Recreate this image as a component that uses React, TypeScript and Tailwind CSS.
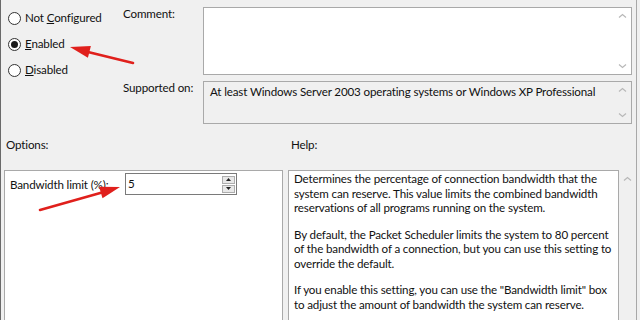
import React from "react";

const Chev = ({ down }: { down?: boolean }) => (
  <svg width="9" height="6" viewBox="0 0 9 6" className="block">
    <path
      d={down ? "M1 1.5 L4.5 4.5 L8 1.5" : "M1 4.5 L4.5 1.5 L8 4.5"}
      fill="none"
      stroke="#b8b8b8"
      strokeWidth="1.2"
    />
  </svg>
);

const Radio = ({ checked, children }: { checked?: boolean; children: React.ReactNode }) => (
  <div className="flex items-center h-[14px] gap-[4px]">
    <div className="w-[13px] h-[13px] rounded-full border border-[#333] bg-white flex items-center justify-center">
      {checked && <div className="w-[7px] h-[7px] rounded-full bg-[#1a1a1a]" />}
    </div>
    <span className="leading-[14px] whitespace-nowrap">{children}</span>
  </div>
);

export default function App() {
  return (
    <div
      className="relative w-[640px] h-[320px] overflow-hidden bg-[#f0f0f0] text-[#111] text-[11.6px] tracking-[-0.15px]"
      style={{ fontFamily: 'Lato, "Noto Sans", sans-serif' }}
    >
      <div className="absolute left-0 top-0 bottom-0 w-[1px] bg-[#6a6a6a]" />
      <div className="absolute right-[3px] top-0 bottom-0 w-[1px] bg-[#a8a8a8]" />

      {/* top section */}
      <div className="flex h-[132px]">
        <div className="w-[123px] pl-[8px] pt-[11px] flex flex-col gap-[12px]">
          <Radio>
            Not <u>C</u>onfigured
          </Radio>
          <Radio checked>
            <u>E</u>nabled
          </Radio>
          <Radio>
            <u>D</u>isabled
          </Radio>
        </div>
        <div className="flex flex-col pt-[7px]">
          <div className="flex">
            <div className="w-[80px] leading-[14px] whitespace-nowrap">Comment:</div>
            <div className="w-[429px] h-[68px] bg-white border border-[#a9a9a9] flex justify-end">
              <div className="w-[17px] flex flex-col justify-between items-center py-[5px]">
                <Chev />
                <Chev down />
              </div>
            </div>
          </div>
          <div className="flex mt-[6px]">
            <div className="w-[80px] leading-[14px] whitespace-nowrap">Supported on:</div>
            <div className="w-[429px] h-[43px] bg-[#f0f0f0] border border-[#a9a9a9] flex">
              <div className="flex-1 pl-[6px] pt-[2px] leading-[15px] whitespace-nowrap">
                At least Windows Server 2003 operating systems or Windows XP Professional
              </div>
              <div className="w-[17px] flex flex-col justify-between items-center py-[5px]">
                <Chev />
                <Chev down />
              </div>
            </div>
          </div>
        </div>
      </div>

      {/* Labels row */}
      <div className="flex h-[38px]">
        <div className="w-[285px] pl-[6px] pt-[4px]">Options:</div>
        <div className="pl-[6px] pt-[4px]">Help:</div>
      </div>

      {/* bottom panels */}
      <div className="flex pl-[4px]">
        <div className="w-[279px] h-[160px] bg-white border border-[#a9a9a9] pt-[2px] pl-[5px]">
          <div className="flex items-start">
            <div className="w-[115px] pt-[3px] whitespace-nowrap">Bandwidth limit (%):</div>
            <div className="w-[112px] h-[22px] bg-white border border-[#7a7a7a] flex">
              <div className="flex-1 pl-[2px] pt-[1px]">5</div>
              <div className="w-[13px] flex flex-col justify-center gap-[1px] mr-[1px]">
                <div className="h-[8px] border border-[#adadad] bg-[#e8e8e8] flex items-center justify-center">
                  <svg width="5" height="3" viewBox="0 0 5 3"><path d="M0 3 L2.5 0 L5 3Z" fill="#222" /></svg>
                </div>
                <div className="h-[8px] border border-[#adadad] bg-[#e8e8e8] flex items-center justify-center">
                  <svg width="5" height="3" viewBox="0 0 5 3"><path d="M0 0 L2.5 3 L5 0Z" fill="#222" /></svg>
                </div>
              </div>
            </div>
          </div>
        </div>
        <div className="ml-[5px] w-[331px] h-[160px] bg-white border border-[#a9a9a9] pl-[5px] pt-[1px] leading-[14.5px] whitespace-nowrap">
          <p>
            Determines the percentage of connection bandwidth that the
            <br />
            system can reserve. This value limits the combined bandwidth
            <br />
            reservations of all programs running on the system.
          </p>
          <p className="mt-[12px]">
            By default, the Packet Scheduler limits the system to 80 percent
            <br />
            of the bandwidth of a connection, but you can use this setting to
            <br />
            override the default.
          </p>
          <p className="mt-[12px]">
            If you enable this setting, you can use the "Bandwidth limit" box
            <br />
            to adjust the amount of bandwidth the system can reserve.
          </p>
        </div>
        <div className="w-[17px] flex justify-center pt-[6px]">
          <Chev />
        </div>
      </div>

      {/* red arrows */}
      <svg className="absolute left-0 top-0" width="640" height="320">
        <line x1="133" y1="63" x2="88" y2="52" stroke="#e0201c" strokeWidth="2.6" strokeLinecap="round" />
        <path d="M70 47 L90.9 46.1 L87.9 57.7 Z" fill="#e0201c" />
        <line x1="40" y1="210" x2="102" y2="192.5" stroke="#e0201c" strokeWidth="2.6" strokeLinecap="round" />
        <path d="M120 187 L99.1 186.7 L102.5 198.3 Z" fill="#e0201c" />
      </svg>
    </div>
  );
}
